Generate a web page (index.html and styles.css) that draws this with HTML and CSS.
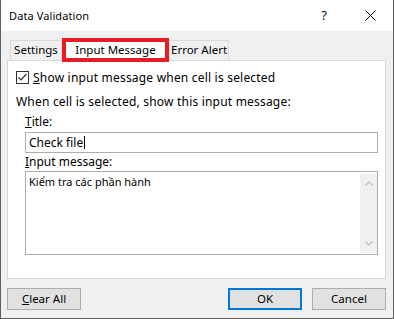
FILE: index.html
```html
<!DOCTYPE html>
<html lang="vi">
<head>
    <meta charset="UTF-8">
    <title>Data Validation</title>
    <link rel="stylesheet" href="styles.css">
</head>
<body>
    <div class="dialog">
        <div class="titlebar">
            <span class="title">Data Validation</span>
            <span class="caption-btn help">?</span>
            <span class="caption-btn">
                <svg width="11" height="11" viewBox="0 0 11 11"><path d="M0.5 0.5 L10.5 10.5 M10.5 0.5 L0.5 10.5" stroke="#000" stroke-width="1" fill="none"/></svg>
            </span>
        </div>
        <div class="content">
            <div class="tabs">
                <div class="tab tab-settings">Settings</div>
                <div class="tab active">Input Message</div>
                <div class="tab tab-error">Error Alert</div>
            </div>
            <div class="panel">
                <label class="check-row">
                    <span class="checkbox">
                        <svg width="11" height="11" viewBox="0 0 11 11"><polyline points="1.5,5.5 4,8 9.5,2" stroke="#333" stroke-width="1.2" fill="none"/></svg>
                    </span>
                    <span class="wide"><u>S</u>how input message when cell is selected</span>
                </label>
                <p class="group-label wide">When cell is selected, show this input message:</p>
                <div class="fields">
                    <div class="field-label"><u>T</u>itle:</div>
                    <div class="textbox">Check file<span class="caret"></span></div>
                    <div class="field-label second"><u>I</u>nput message:</div>
                    <div class="textarea">
                        <div class="textarea-text">Kiểm tra các phần hành</div>
                        <div class="scrollbar">
                            <svg width="8" height="5" viewBox="0 0 8 5"><polyline points="0.5,4.5 4,1 7.5,4.5" stroke="#c2c2c2" stroke-width="1.4" fill="none"/></svg>
                            <svg width="8" height="5" viewBox="0 0 8 5"><polyline points="0.5,0.5 4,4 7.5,0.5" stroke="#c2c2c2" stroke-width="1.4" fill="none"/></svg>
                        </div>
                    </div>
                </div>
            </div>
            <div class="buttons">
                <div class="btn"><u>C</u>lear All</div>
                <div class="btn btn-default">OK</div>
                <div class="btn btn-cancel">Cancel</div>
            </div>
        </div>
    </div>
</body>
</html>
```

FILE: styles.css
```css
/* Dialog frame */
body {
    margin: 0;
    font-family: 'Noto Sans', sans-serif;
    font-size: 12px;
    color: #000;
    background: #f0f0f0;
}

.dialog {
    width: 394px;
    height: 319px;
    box-sizing: border-box;
    border-left: 1px solid #5f5f5f;
    border-right: 1px solid #5f5f5f;
    border-bottom: 1px solid #5f5f5f;
    display: flex;
    flex-direction: column;
    overflow: hidden;
}

.titlebar {
    height: 31px;
    background: #fff;
    display: flex;
}

.title {
    flex: 1;
    padding: 8px 0 0 8px;
    line-height: 15px;
    font-size: 11px;
    letter-spacing: 0.1px;
}

.caption-btn {
    width: 46px;
    display: flex;
    align-items: center;
    justify-content: center;
}

.help {
    font-size: 13px;
    padding-bottom: 1px;
    color: #111;
}

.content {
    flex: 1;
    padding: 7px 7px 0 6px;
}

.wide {
    letter-spacing: 0.2px;
}

/* Tabs */
.tabs {
    display: flex;
    align-items: flex-end;
    height: 22px;
    padding-left: 3px;
    font-size: 11.5px;
    white-space: nowrap;
}

.tab {
    height: 20px;
    box-sizing: border-box;
    border: 1px solid #d9d9d9;
    border-bottom: none;
    line-height: 18px;
    text-align: center;
}

.tab-settings {
    width: 52px;
}

.tab-error {
    width: 60px;
    padding-left: 1px;
    text-align: left;
}

.tab.active {
    width: 107px;
    height: 24px;
    border: 4px solid #e81c24;
    background: #fff;
    line-height: 16px;
    margin-bottom: -2px;
    position: relative;
    z-index: 1;
}

.panel {
    height: 219px;
    box-sizing: border-box;
    background: #fff;
    border: 1px solid #d9d9d9;
    padding: 10px 7px 0 8px;
}

/* Checkbox */
.check-row {
    display: flex;
    align-items: center;
    gap: 4px;
    height: 13px;
    line-height: 13px;
}

.checkbox {
    width: 13px;
    height: 13px;
    box-sizing: border-box;
    border: 1px solid #333;
    display: flex;
    align-items: center;
    justify-content: center;
}

.group-label {
    margin: 10px 0 0;
    line-height: 15px;
}

/* Fields */
.fields {
    margin-left: 9px;
}

.field-label {
    margin-top: 5px;
    line-height: 15px;
}

.field-label.second {
    margin-top: 1px;
}

.textbox {
    margin-top: 3px;
    height: 21px;
    box-sizing: border-box;
    border: 1px solid #adadad;
    padding: 0 3px;
    line-height: 19px;
    display: flex;
    align-items: center;
}

.caret {
    width: 1px;
    height: 13px;
    background: #000;
    margin-left: 1px;
}

.textarea {
    margin-top: 2px;
    height: 84px;
    box-sizing: border-box;
    border: 1px solid #adadad;
    display: flex;
}

.textarea-text {
    flex: 1;
    padding: 2px 3px;
    line-height: 15px;
    font-size: 11px;
}

.scrollbar {
    width: 17px;
    margin: 2px 0 1px;
    background: #f0f0f0;
    display: flex;
    flex-direction: column;
    align-items: center;
    justify-content: space-between;
    padding: 7px 0 7px;
    box-sizing: border-box;
}

/* Buttons */
.buttons {
    display: flex;
    margin-top: 9px;
    font-size: 11.5px;
}

.btn {
    width: 74px;
    height: 22px;
    box-sizing: border-box;
    background: #e1e1e1;
    border: 1px solid #adadad;
    line-height: 20px;
    text-align: center;
}

.btn-default {
    margin-left: auto;
    border: 2px solid #0078d7;
    line-height: 18px;
}

.btn-cancel {
    margin-left: 10px;
}
```
